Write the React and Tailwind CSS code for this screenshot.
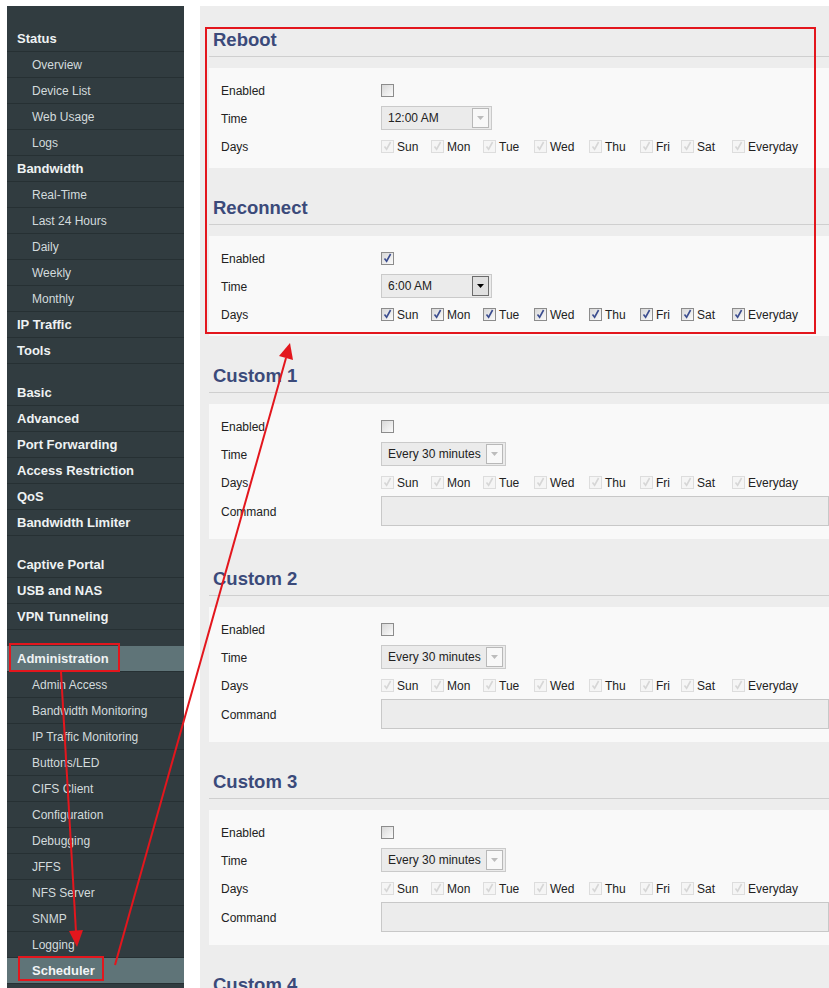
import React from "react";

const menu = [
  { label: "Status", head: true },
  { label: "Overview" },
  { label: "Device List" },
  { label: "Web Usage" },
  { label: "Logs" },
  { label: "Bandwidth", head: true },
  { label: "Real-Time" },
  { label: "Last 24 Hours" },
  { label: "Daily" },
  { label: "Weekly" },
  { label: "Monthly" },
  { label: "IP Traffic", head: true },
  { label: "Tools", head: true },
  { spacer: true },
  { label: "Basic", head: true },
  { label: "Advanced", head: true },
  { label: "Port Forwarding", head: true },
  { label: "Access Restriction", head: true },
  { label: "QoS", head: true },
  { label: "Bandwidth Limiter", head: true },
  { spacer: true },
  { label: "Captive Portal", head: true },
  { label: "USB and NAS", head: true },
  { label: "VPN Tunneling", head: true },
  { spacer: true },
  { label: "Administration", head: true, active: true },
  { label: "Admin Access" },
  { label: "Bandwidth Monitoring" },
  { label: "IP Traffic Monitoring" },
  { label: "Buttons/LED" },
  { label: "CIFS Client" },
  { label: "Configuration" },
  { label: "Debugging" },
  { label: "JFFS" },
  { label: "NFS Server" },
  { label: "SNMP" },
  { label: "Logging" },
  { label: "Scheduler", active: true, bold: true },
];

// width of each day cell, checkbox to next checkbox
const days = [
  { d: "Sun", w: "w-[50px]" },
  { d: "Mon", w: "w-[52px]" },
  { d: "Tue", w: "w-[51px]" },
  { d: "Wed", w: "w-[55px]" },
  { d: "Thu", w: "w-[51px]" },
  { d: "Fri", w: "w-[41px]" },
  { d: "Sat", w: "w-[51px]" },
  { d: "Everyday", w: "w-[70px]" },
];

const Box = ({ checked, disabled }) => (
  <span
    className={`inline-flex w-[13px] h-[13px] shrink-0 items-center justify-center border ${
      disabled
        ? "border-[#dddddd] bg-[#f5f5f5]"
        : "border-[#8c8c8c] bg-linear-to-br from-[#d8d8d8] to-[#fbfbfb]"
    }`}
  >
    {checked && (
      <svg width="9" height="10" viewBox="0 0 9 10">
        <path
          d="M1.5 5.5 L3.6 8.2 L7.6 1"
          fill="none"
          stroke={disabled ? "#d6d6d6" : "#3b4d8f"}
          strokeWidth="1.6"
        />
      </svg>
    )}
  </span>
);

const Select = ({ value, width, disabled }) => (
  <div className={`flex items-center justify-between h-[24px] ${width} border border-[#cacaca] bg-[#ebebeb] pl-[6px] pr-[2px]`}>
    <span className="text-[12px] text-[#222]">{value}</span>
    <span
      className={`flex items-center justify-center w-[17px] h-[20px] border ${
        disabled ? "border-[#b8b8b8] bg-[#f8f8f8]" : "border-[#6c6c6c] bg-[#e0e0e0]"
      }`}
    >
      <svg width="7" height="4" viewBox="0 0 7 4">
        <path d="M0 0H7L3.5 4Z" fill={disabled ? "#bcbcbc" : "#000"} />
      </svg>
    </span>
  </div>
);

const Row = ({ label, children, className = "h-[28px]" }) => (
  <div className={`flex items-center ${className}`}>
    <div className="w-[160px] text-[12px] text-[#222] pt-[1px]">{label}</div>
    {children}
  </div>
);

const Section = ({ title, enabled, time, timeWidth, command, first }) => (
  <div className={first ? "" : "mt-[28px]"}>
    <div className="pl-[4px] pt-[1px] pb-[5px] border-b border-[#cfcfcf] text-[18.5px] leading-[22px] font-bold text-[#3b4a7a]">
      {title}
    </div>
    <div className="mt-[11px] bg-[#f9f9f9] pl-[12px] py-2">
      <Row label="Enabled">
        <Box checked={enabled} />
      </Row>
      <Row label="Time">
        <Select value={time} width={timeWidth} disabled={!enabled} />
      </Row>
      <Row label="Days">
        <div className="flex items-center">
          {days.map(({ d, w }) => (
            <div key={d} className={`flex items-center shrink-0 ${w}`}>
              <Box checked disabled={!enabled} />
              <span className="ml-[3px] text-[12px] text-[#222] pt-[1px]">{d}</span>
            </div>
          ))}
        </div>
      </Row>
      {command && (
        <Row label="Command" className="h-[30px] mb-[5px]">
          <div className="flex-1 h-[30px] border border-[#c8c8c8] bg-[#ececec]"></div>
        </Row>
      )}
    </div>
  </div>
);

export default function App() {
  return (
    <div
      className="relative h-[988px] overflow-hidden bg-white flex pt-[6px] pl-[7px]"
      style={{ fontFamily: '"Liberation Sans", Arial, sans-serif' }}
    >
      <div className="w-[177px] shrink-0 bg-[#313c40] pt-[20px]">
        {menu.map((m, i) =>
          m.spacer ? (
            <div key={i} className="h-[16px]"></div>
          ) : (
            <div
              key={i}
              className={`flex items-center h-[26px] border-b border-[#263033] ${m.active ? "bg-[#5f7478]" : ""} ${
                m.head ? "pl-[10px] text-[13px] font-bold text-[#eef2f3]" : "pl-[25px] text-[12px] text-[#d3dbdd]"
              } ${m.bold ? "font-bold text-[13px] text-[#f2f5f6]" : ""}`}
            >
              {m.label}
            </div>
          )
        )}
      </div>

      <div className="ml-[16px] flex-1 bg-[#ededed] pl-[9px] pt-[22px]">
        <Section first title="Reboot" enabled={false} time="12:00 AM" timeWidth="w-[111px]" />
        <Section title="Reconnect" enabled time="6:00 AM" timeWidth="w-[111px]" />
        <Section title="Custom 1" enabled={false} time="Every 30 minutes" timeWidth="w-[125px]" command />
        <Section title="Custom 2" enabled={false} time="Every 30 minutes" timeWidth="w-[125px]" command />
        <Section title="Custom 3" enabled={false} time="Every 30 minutes" timeWidth="w-[125px]" command />
        <Section title="Custom 4" enabled={false} time="Every 30 minutes" timeWidth="w-[125px]" command />
      </div>

      {/* red annotations */}
      <div className="absolute left-[205px] top-[27px] w-[611px] h-[307px] border-2 border-[#e3161d] pointer-events-none"></div>
      <div className="absolute left-[9px] top-[643px] w-[111px] h-[29px] border-2 border-[#e3161d] pointer-events-none"></div>
      <div className="absolute left-[18px] top-[956px] w-[86px] h-[25px] border-2 border-[#e3161d] pointer-events-none"></div>
      <svg className="absolute left-0 top-0 pointer-events-none" width="829" height="988">
        <line x1="61" y1="672" x2="76" y2="932" stroke="#e3161d" strokeWidth="2" />
        <polygon points="77,947 83,930 69,931" fill="#e3161d" />
        <line x1="115" y1="965" x2="286" y2="358" stroke="#e3161d" strokeWidth="2" />
        <polygon points="290,343 293,360 279,356" fill="#e3161d" />
      </svg>
    </div>
  );
}
